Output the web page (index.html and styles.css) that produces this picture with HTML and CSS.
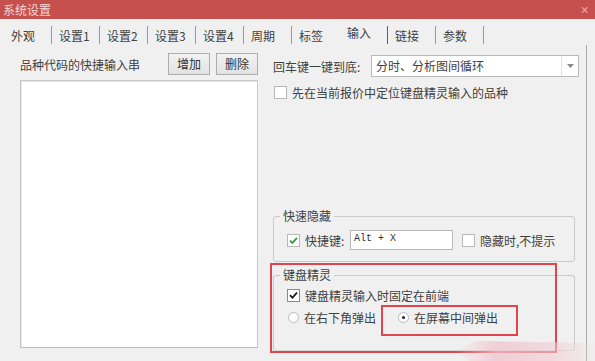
FILE: index.html
```html
<!DOCTYPE html>
<html lang="zh">
<head>
<meta charset="utf-8">
<link rel="stylesheet" href="styles.css">
</head>
<body>
<div class="window">
  <div class="titlebar">
    <span class="title">系统设置</span>
    <span class="close">✕</span>
  </div>
  <div class="tabs">
    <span class="tab">外观</span>
    <span class="tab">设置1</span>
    <span class="tab">设置2</span>
    <span class="tab">设置3</span>
    <span class="tab">设置4</span>
    <span class="tab">周期</span>
    <span class="tab no-sep">标签</span>
    <span class="tab active">输入</span>
    <span class="tab">链接</span>
    <span class="tab">参数</span>
  </div>
  <div class="panel">
    <div class="left">
      <div class="left-head">
        <span class="label">品种代码的快捷输入串</span>
        <span class="btn">增加</span>
        <span class="btn">删除</span>
      </div>
      <div class="listbox"></div>
    </div>
    <div class="right">
      <div class="combo-row">
        <span class="combo-label">回车键一键到底:</span>
        <div class="combo">
          <span class="combo-text">分时、分析图间循环</span>
          <span class="combo-arrow"><svg width="7" height="4" viewBox="0 0 7 4"><path d="M0 0h7L3.5 4z" fill="#8a8a8a"/></svg></span>
        </div>
      </div>
      <div class="check-row">
        <span class="cb"></span>
        <span>先在当前报价中定位键盘精灵输入的品种</span>
      </div>
      <fieldset class="group g1">
        <legend>快速隐藏</legend>
        <div class="g1-row">
          <span class="cb checked-green"><svg width="11" height="11" viewBox="0 0 11 11"><path d="M2 5.5l2.3 2.5L9 2.8" fill="none" stroke="#2f9a3a" stroke-width="1.8"/></svg></span>
          <span class="hk-label">快捷键:</span>
          <span class="hk-input">Alt + X</span>
          <span class="cb"></span>
          <span>隐藏时,不提示</span>
        </div>
      </fieldset>
      <fieldset class="group g2">
        <legend>键盘精灵</legend>
        <div class="g2-row">
          <span class="cb checked-black"><svg width="11" height="11" viewBox="0 0 11 11"><path d="M2 5.2l2.4 2.6L9 2.6" fill="none" stroke="#111" stroke-width="1.7"/></svg></span>
          <span>键盘精灵输入时固定在前端</span>
        </div>
        <div class="g2-row radios">
          <span class="radio-item r1"><span class="radio"></span><span>在右下角弹出</span></span>
          <span class="radio-item"><span class="radio on"></span><span>在屏幕中间弹出</span></span>
        </div>
      </fieldset>
    </div>
  </div>
  <div class="hl hl-big"></div>
  <div class="hl hl-small"></div>
  <div class="mark"></div>
</div>
</body>
</html>
```

FILE: styles.css
```css
* { box-sizing: border-box; }
html, body { margin: 0; padding: 0; }
body {
  width: 595px;
  height: 361px;
  overflow: hidden;
  background: #f0f0f0;
  font-family: "Noto Sans CJK SC", "Noto Sans", sans-serif;
  font-size: 12px;
  color: #404040;
}
.window {
  position: relative;
  width: 595px;
  height: 361px;
  background: #f0f0f0;
}
.titlebar {
  height: 19px;
  background: #c5504e;
  display: flex;
  align-items: center;
  justify-content: space-between;
  padding: 0 6px 0 3px;
  color: #f6d8d8;
  line-height: 19px;
}
.title { font-size: 12px; }
.close { font-size: 11px; color: #f0a3a3; }

.tabs {
  height: 26px;
  display: flex;
  align-items: flex-end;
  padding-left: 4px;
  padding-bottom: 1px;
}
.tab {
  width: 48px;
  height: 18px;
  line-height: 20px;
  padding-left: 7px;
  border-right: 1px solid #9a9a9a;
  white-space: nowrap;
}
.tab.no-sep { border-right: none; }
.tab.active {
  line-height: 14px;
  border-right: 1px solid #606060;
}

.panel {
  display: flex;
  width: 587px;
  height: 316px;
  padding: 8px 0 0 20px;
  border-right: 1px solid #a9a9a9;
}
.left {
  width: 238px;
  display: flex;
  flex-direction: column;
}
.left-head {
  height: 22px;
  display: flex;
  align-items: center;
}
.left-head .label { flex: 1; }
.btn {
  width: 42px;
  height: 22px;
  margin-left: 6px;
  border: 1px solid #adadad;
  background: linear-gradient(#f2f2f2, #e2e2e2);
  text-align: center;
  line-height: 20px;
  color: #333;
}
.listbox {
  margin-top: 5px;
  height: 268px;
  background: #fff;
  border: 1px solid #c8c8c8;
  border-bottom-color: #bdbdbd;
  box-shadow: inset 1px 1px 0 #e6e6e6;
}
.right {
  width: 311px;
  margin-left: 14px;
}
.combo-row {
  margin-top: 2px;
  height: 22px;
  display: flex;
  align-items: center;
}
.combo-label {
  width: 99px;
  padding-left: 1px;
}
.combo {
  width: 208px;
  height: 22px;
  display: flex;
  background: #fff;
  border: 1px solid #b9b9b9;
}
.combo-text {
  flex: 1;
  padding-left: 4px;
  line-height: 20px;
}
.combo-arrow {
  width: 17px;
  border-left: 1px solid #e2e2e2;
  display: flex;
  align-items: center;
  justify-content: center;
}
.check-row {
  margin-top: 9px;
  height: 13px;
  display: flex;
  align-items: center;
  padding-left: 2px;
  line-height: 13px;
}
.cb {
  width: 13px;
  height: 13px;
  border: 1px solid #b8b8b8;
  background: #fff;
  margin-right: 5px;
  display: inline-flex;
  align-items: center;
  justify-content: center;
  flex: none;
}
.cb.checked-black { border-color: #8a8a8a; }

.group {
  margin: 0 0 0 1px;
  width: 302px;
  border: 1px solid #cacaca;
  border-radius: 3px;
  padding: 0 0 0 13px;
  min-width: 0;
}
.group legend {
  margin-left: -7px;
  padding: 0 3px;
  line-height: 14px;
  height: 14px;
}
.g1 {
  margin-top: 110px;
  padding-top: 7px;
  padding-bottom: 11px;
}
.g1-row {
  height: 20px;
  display: flex;
  align-items: center;
}
.hk-label { width: 45px; }
.hk-input {
  width: 103px;
  height: 20px;
  border: 1px solid #b9b9b9;
  background: #fff;
  font-family: "Liberation Mono", monospace;
  font-size: 10px;
  line-height: 15px;
  padding-left: 3px;
  margin-right: 9px;
  color: #333;
}
.g2 {
  margin-top: 6px;
  padding-top: 7px;
  padding-bottom: 26px;
  border-bottom-color: #d8d8d8;
}
.g2-row {
  height: 13px;
  display: flex;
  align-items: center;
  line-height: 13px;
}
.g2-row.radios { margin-top: 9px; padding-left: 1px; }
.radio-item { display: flex; align-items: center; }
.radio-item.r1 { width: 110px; }
.radio {
  width: 11px;
  height: 11px;
  border: 1px solid #bbbbbb;
  border-radius: 50%;
  background: #fff;
  margin-right: 5px;
  display: inline-flex;
  align-items: center;
  justify-content: center;
}
.radio.on::after {
  content: "";
  width: 3px;
  height: 3px;
  border-radius: 50%;
  background: #222;
}

.hl {
  position: absolute;
  border: 2px solid #e0454e;
}
.hl-big { left: 270px; top: 263px; width: 287px; height: 90px; }
.hl-small { left: 381px; top: 305px; width: 137px; height: 31px; }
.mark {
  position: absolute;
  left: 455px;
  top: 341px;
  width: 140px;
  height: 20px;
  background: linear-gradient(to right, rgba(240,190,200,0) 0%, rgba(240,195,205,0.75) 30%, rgba(240,205,212,0.6) 70%, rgba(240,225,228,0.2) 100%);
  clip-path: polygon(0 50%, 15% 0, 100% 10%, 100% 100%, 10% 100%);
}
```
